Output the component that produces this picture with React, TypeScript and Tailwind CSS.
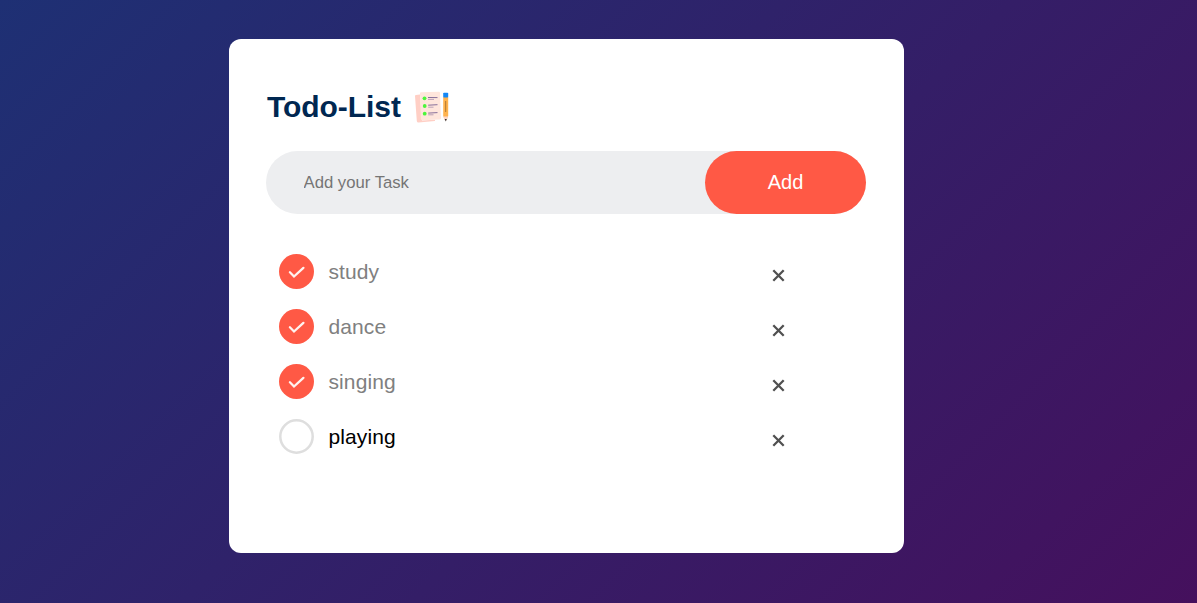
import { useState } from "react";

const initial = [
  { text: "study", done: true },
  { text: "dance", done: true },
  { text: "singing", done: true },
  { text: "playing", done: false },
];

function Notepad() {
  return (
    <svg className="h-[34px] w-[36px]" viewBox="0 0 36 34" fill="none">
      <path d="M2 5 6 4.5 8 30.5 21 29.8V31L4.5 32.5Q3 32.5 2.8 31L1 6Q1 5 2 5Z" fill="#ffcfc5" />
      <path d="M7 2.3 25 1.8Q26 1.8 26 3L27 28Q27 29.5 25.5 29.6L8.5 30.2Q7 30 6.8 28.5L6 3.5Q6 2.4 7 2.3Z" fill="#ffe6dc" />
      <circle cx="10.5" cy="8.3" r="1.9" fill="#4cf53c" />
      <circle cx="10.7" cy="16" r="1.9" fill="#4cf53c" />
      <circle cx="10.7" cy="23.7" r="1.9" fill="#4cf53c" />
      <path d="M14 7.5 23.5 7.6M14.2 15.2 23.5 14.7M14.2 23.1 23.5 22.6" stroke="#88709a" strokeWidth="1" />
      <path d="M14 9.4H20M14.2 17.2H19.5M14.2 24.8H19.5" stroke="#a990ae" strokeWidth="0.8" />
      <path d="M29.2 7H34.2V26L32.5 30H31L29.2 26Z" fill="#ffb24d" />
      <path d="M31.7 11V22" stroke="#a8732e" strokeWidth="0.9" />
      <path d="M29.2 26.5H34.2L32.5 30.5H31Z" fill="#ffd6c6" />
      <path d="M30.7 29H32.8L31.8 31.4Z" fill="#333" />
      <rect x="29.2" y="2.8" width="5" height="4.7" rx="0.8" fill="#1387f5" />
    </svg>
  );
}

export default function App() {
  const [tasks, setTasks] = useState(initial);
  return (
    <div className="h-[603px] overflow-hidden bg-[linear-gradient(135deg,#1e3074,#45105d)] pt-[39px] font-['Liberation_Sans',Arial,sans-serif]">
      <main className="ml-[229px] h-[514px] w-[675px] rounded-[12px] bg-white px-[37px] pt-[49px]">
        <div className="flex h-[37px] items-center pl-px">
          <h1 className="w-[147px] text-[30px] font-bold tracking-[-0.05px] text-[#002751]">Todo-List</h1>
          <Notepad />
        </div>
        <div className="mt-[26px] flex h-[63px] w-[600px] rounded-full bg-[#edeef0]">
          <input className="min-w-0 flex-1 pl-[37.5px] text-[16.7px] outline-none placeholder:text-[#757575]" placeholder="Add your Task" />
          <button className="w-[161px] rounded-full bg-[#ff5945] pb-[2px] text-[20px] text-white">Add</button>
        </div>
        <ul className="pt-[30px]">
          {tasks.map((task, i) => (
            <li key={task.text} className="flex h-[55px] items-center pl-[13px]">
              <button
                aria-label={task.text}
                onClick={() => setTasks(tasks.map((t, j) => (j === i ? { ...t, done: !t.done } : t)))}
                className="size-[35px]"
              >
                <svg viewBox="0 0 35 35" className="size-[35px]" fill="none">
                  {task.done ? (
                    <>
                      <circle cx="17.5" cy="17.5" r="17.5" fill="#ff5945" />
                      <path d="M10.9 18.3 15 22.5 24.4 13.9" stroke="#fff3ef" strokeWidth="2.3" strokeLinecap="round" />
                    </>
                  ) : (
                    <circle cx="17.5" cy="17.5" r="16.2" stroke="#dedede" strokeWidth="2.5" />
                  )}
                </svg>
              </button>
              <span className={task.done ? "ml-[14.5px] w-[443.5px] text-[21px] tracking-[0.1px] text-[#808080]" : "ml-[14.5px] w-[443.5px] text-[21px] tracking-[0.1px] text-black"}>{task.text}</span>
              <svg className="mt-[9px] h-[14px] w-[13px]" viewBox="0 0 13 14" fill="none">
                <path d="m1.3 1.3 10.4 10.4M11.7 1.3 1.3 11.7" stroke="#505050" strokeWidth="2.3" />
              </svg>
            </li>
          ))}
        </ul>
      </main>
    </div>
  );
}
